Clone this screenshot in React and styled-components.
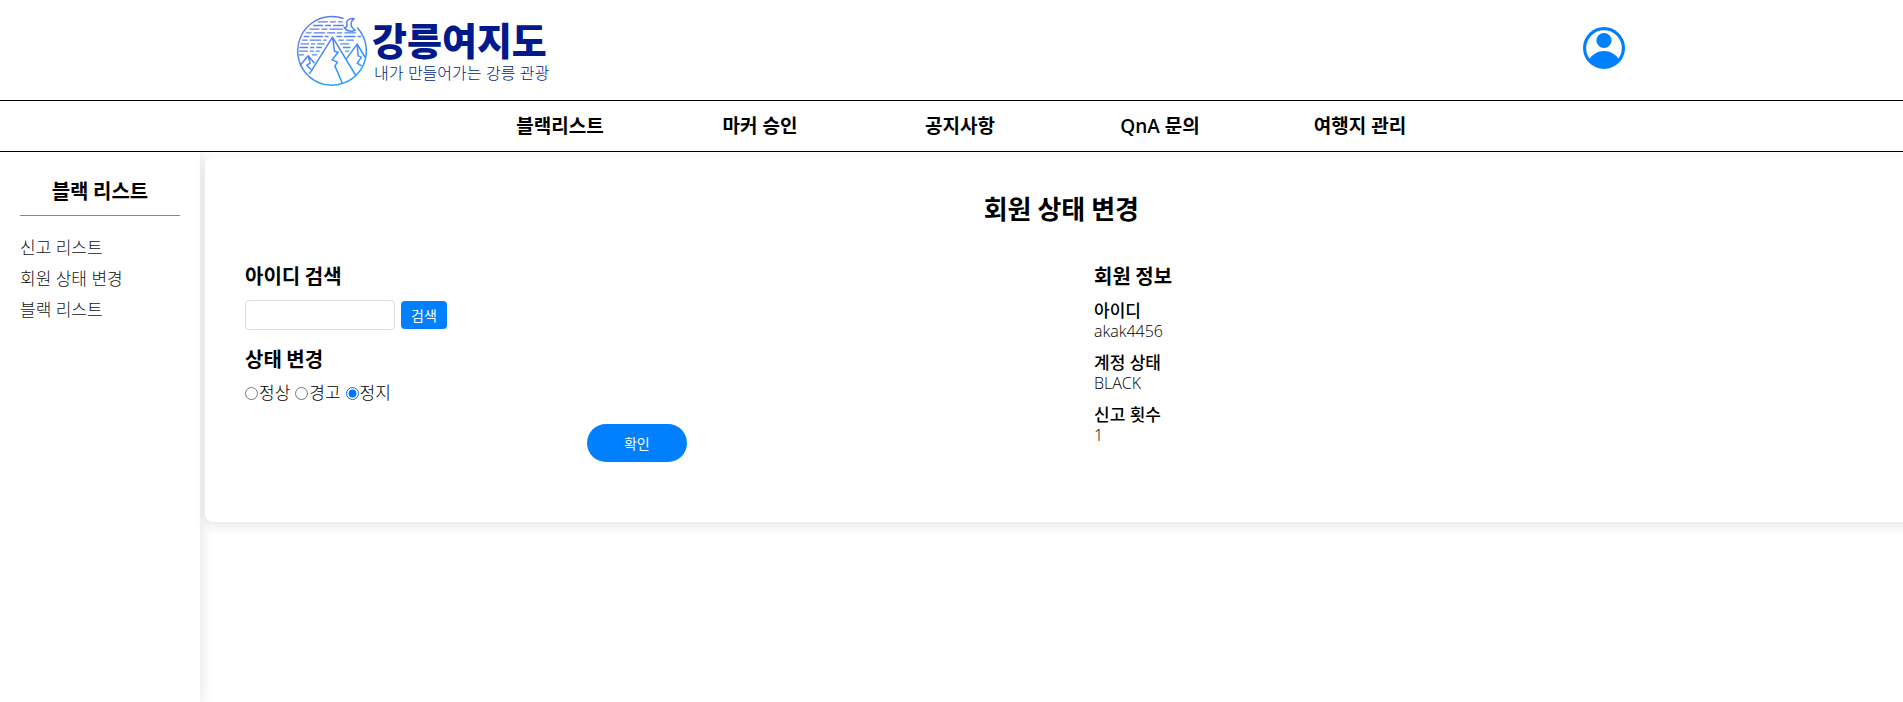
import React, { useState } from "react";
import styled, { createGlobalStyle } from "styled-components";

const BODY_FONT = `"Open Sans", "Noto Sans CJK KR", sans-serif`;
const TITLE_FONT = `"Noto Sans CJK KR", sans-serif`;
const LOGO_FONT = `"Liberation Sans", "Noto Sans CJK KR", sans-serif`;

const GlobalStyle = createGlobalStyle`
  * { box-sizing: border-box; }
  body {
    margin: 0;
    overflow-x: hidden;
    background: #fff;
    color: #000;
    font-family: ${BODY_FONT};
    font-size: 16px;
  }
  h1, h2, dl, dd, ul { margin: 0; padding: 0; }
  ul { list-style: none; }
  a { color: inherit; text-decoration: none; }
`;

const Page = styled.div`
  display: flex;
  flex-direction: column;
  min-height: 100vh;
`;

const Header = styled.header`
  display: flex;
  justify-content: space-between;
  align-items: center;
  height: 101px;
  padding: 2px 278px 0 296px;
  border-bottom: 1px solid #000;
`;

const Logo = styled.a`
  display: flex;
  align-items: center;
  gap: 4px;
  color: #001a8c;
`;

const LogoText = styled.span`
  display: flex;
  flex-direction: column;
`;

const LogoName = styled.strong`
  font: 900 38px/46px ${LOGO_FONT};
`;

const LogoTagline = styled.span`
  padding-left: 2px;
  font: 300 16px/18px ${LOGO_FONT};
`;

const ProfileLink = styled.a`
  display: flex;
  margin-bottom: 6px;
`;

const Nav = styled.nav`
  height: 51px;
  padding-left: 17px;
  border-bottom: 1px solid #000;
`;

const NavList = styled.ul`
  display: flex;
  justify-content: center;
`;

const NavItem = styled.li`
  width: 200px;
  text-align: center;
  font-size: 19px;
  font-weight: 600;
  line-height: 51px;
`;

const Main = styled.main`
  display: flex;
  flex: 1;
  align-items: flex-start;
  overflow: hidden;
`;

const Sidebar = styled.aside`
  flex: none;
  align-self: stretch;
  width: 200px;
  padding: 20px;
  box-shadow: 2px 0 12px rgba(0, 0, 0, 0.1);
`;

const SidebarTitle = styled.h2`
  padding-bottom: 5px;
  margin-bottom: 16px;
  border-bottom: 1px solid #888;
  text-align: center;
  font: 700 20px/38px ${TITLE_FONT};
`;

const SidebarItem = styled.li`
  color: #111;
  font-size: 17px;
  font-weight: 300;
  line-height: 31px;
`;

const Card = styled.section`
  position: relative;
  flex: none;
  width: 90%;
  min-height: 365px;
  margin: 5px 0 0 5px;
  padding: 31px 40px;
  border-radius: 8px;
  background: #fff;
  box-shadow: 0 4px 12px rgba(0, 0, 0, 0.1);
`;

const CardTitle = styled.h1`
  margin-bottom: 31px;
  text-align: center;
  font: 700 26px/40px ${TITLE_FONT};
`;

const Columns = styled.div`
  display: flex;
  justify-content: space-between;
`;

const Column = styled.div`
  width: 48%;
`;

const SectionTitle = styled.h2`
  display: block;
  margin-bottom: 7px;
  font: 700 20px/34px ${TITLE_FONT};
`;

const SearchRow = styled.div`
  display: flex;
  align-items: center;
  gap: 6px;
  margin-bottom: 12px;
`;

const SearchInput = styled.input`
  width: 150px;
  height: 30px;
  padding: 5px;
  border: 1px solid #ddd;
  border-radius: 4px;
  font-family: inherit;
`;

const Button = styled.button`
  border: 0;
  padding: 0;
  color: #fff;
  background: #0080ff;
  font-family: inherit;
  font-size: 14px;
  cursor: pointer;
`;

const SearchButton = styled(Button)`
  width: 46px;
  height: 28px;
  border-radius: 4px;
`;

const ConfirmButton = styled(Button)`
  display: block;
  width: 100px;
  height: 38px;
  margin: 21px auto 0;
  border-radius: 20px;
`;

const RadioRow = styled.div`
  display: flex;
  gap: 5px;
`;

const RadioLabel = styled.label`
  display: flex;
  align-items: center;
  font-size: 17px;
  font-weight: 300;
  line-height: 20px;

  input {
    width: 13px;
    height: 13px;
    margin: 0 1px 0 0;
    accent-color: #0075ff;
  }
`;

const InfoItem = styled.div`
  margin-bottom: 10px;
  line-height: 21px;

  dt { font-size: 17px; font-weight: 500; }
  dd { font-size: 16px; font-weight: 300; }
`;

const LogoMark = () => (
  <svg width="72" height="72" viewBox="6.5 15.5 216 216" fill="none" stroke="url(#sky)" strokeWidth="4.5" strokeLinejoin="round" aria-hidden="true">
    <defs>
      <linearGradient id="sky" x1="30" y1="20" x2="120" y2="228" gradientUnits="userSpaceOnUse">
        <stop offset="0" stopColor="#3f86f5" />
        <stop offset="0.2" stopColor="#6478f5" />
        <stop offset="0.45" stopColor="#4b86f6" />
        <stop offset="1" stopColor="#2b9cff" />
      </linearGradient>
    </defs>
    <path d="M149 26A103 103 0 1 0 190 53" />
    <path d="M181 26C164 24 156 34 159 43C162 54 151 53 151 53C158 65 175 67 184 60C168 53 169 36 181 26Z" />
    <g strokeWidth="4">
      <path strokeDasharray="30 6 18 6 40 7" d="M72 36H146M58 47H150M47 58H148" />
      <path strokeDasharray="16 7 34 6 24 5" d="M37 69H190M30 80H104M128 80H202M25 91H98M134 91H180" />
      <path strokeDasharray="26 6 12 6 36 7" d="M20 102H92M140 102H172M17 113H84M147 113H170M16 124H78M154 124H166M15 135H30M54 135H70" />
    </g>
    <path d="M47 192L116 82L186 197M116 82L122 124L133 127L115 150L131 157L123 168L146 221" />
    <path d="M18 168L43 138L62 160M43 138L49 160L39 166L52 180" />
    <path d="M157 148L190 103L214 143M190 103L193 138L203 142L190 160L203 168" />
  </svg>
);

const ProfileIcon = () => (
  <svg width="42" height="42" viewBox="0 0 42 42" aria-hidden="true">
    <defs><clipPath id="face"><circle cx="21" cy="21" r="20" /></clipPath></defs>
    <circle cx="21" cy="21" r="19.4" fill="none" stroke="#0080ff" strokeWidth="3.2" />
    <circle cx="21" cy="13.5" r="7.6" fill="#0080ff" />
    <path clipPath="url(#face)" fill="#0080ff" d="M5 34C9 27 15 24 21 24S33 27 37 34V42H5Z" />
  </svg>
);

const NAV = ["블랙리스트", "마커 승인", "공지사항", "QnA 문의", "여행지 관리"];
const SIDE = ["신고 리스트", "회원 상태 변경", "블랙 리스트"];
const STATES = ["정상", "경고", "정지"];
const INFO = [["아이디", "akak4456"], ["계정 상태", "BLACK"], ["신고 횟수", "1"]];

export default function App() {
  const [state, setState] = useState("정지");
  return (
    <Page>
      <GlobalStyle />
      <Header>
        <Logo href="#">
          <LogoMark />
          <LogoText>
            <LogoName>강릉여지도</LogoName>
            <LogoTagline>내가 만들어가는 강릉 관광</LogoTagline>
          </LogoText>
        </Logo>
        <ProfileLink href="#" aria-label="프로필"><ProfileIcon /></ProfileLink>
      </Header>
      <Nav>
        <NavList>
          {NAV.map((name) => <NavItem key={name}><a href="#">{name}</a></NavItem>)}
        </NavList>
      </Nav>
      <Main>
        <Sidebar>
          <SidebarTitle>블랙 리스트</SidebarTitle>
          <ul>
            {SIDE.map((name) => <SidebarItem key={name}><a href="#">{name}</a></SidebarItem>)}
          </ul>
        </Sidebar>
        <Card>
          <CardTitle>회원 상태 변경</CardTitle>
          <Columns>
            <Column as="form" onSubmit={(e) => e.preventDefault()}>
              <SectionTitle as="label" htmlFor="user-id">아이디 검색</SectionTitle>
              <SearchRow>
                <SearchInput id="user-id" type="text" />
                <SearchButton type="button">검색</SearchButton>
              </SearchRow>
              <SectionTitle>상태 변경</SectionTitle>
              <RadioRow>
                {STATES.map((name) => (
                  <RadioLabel key={name}>
                    <input type="radio" name="state" checked={state === name} onChange={() => setState(name)} />
                    {name}
                  </RadioLabel>
                ))}
              </RadioRow>
              <ConfirmButton type="submit">확인</ConfirmButton>
            </Column>
            <Column>
              <SectionTitle>회원 정보</SectionTitle>
              <dl>
                {INFO.map(([term, value]) => (
                  <InfoItem key={term}><dt>{term}</dt><dd>{value}</dd></InfoItem>
                ))}
              </dl>
            </Column>
          </Columns>
        </Card>
      </Main>
    </Page>
  );
}
